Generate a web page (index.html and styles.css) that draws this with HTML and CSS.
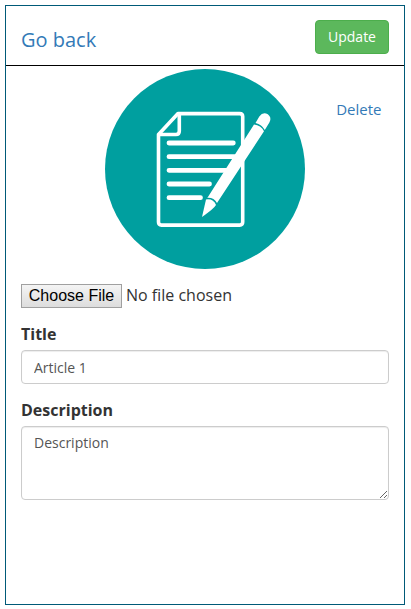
FILE: index.html
```html
<!DOCTYPE html>
<html lang="en">
<head>
<meta charset="utf-8">
<title>Edit article</title>
<link rel="stylesheet" href="styles.css">
</head>
<body>
<main class="panel">
  <header class="header">
    <a class="back">Go back</a>
    <button class="update" type="button">Update</button>
  </header>
  <section class="media">
    <svg class="picture" viewBox="0 0 200 200" width="200" height="200">
      <circle cx="100" cy="100" r="100" fill="#009f9f"/>
      <g fill="none" stroke="#fff" stroke-width="3.6" stroke-linejoin="round" stroke-linecap="round">
        <path d="M73 44.600H134.700Q137.700 44.600 137.700 47.600V153.100Q137.700 156.100 134.700 156.100H56.500Q53.500 156.100 53.500 153.100V65.500Z"/>
        <path d="M74.300 45.500V62Q74.300 65.500 71 65.500H54.500"/>
        <path stroke-width="4.800" d="M64 74H128.300M64 87.700H131M64 101.300H122M64 115H104.500M64 128.700H95.500"/>
      </g>
      <g fill="#fff">
        <path d="M150.500 54L154.300 47.500Q158 42.300 162.800 45.300Q167 48.500 164.500 53.300L159.800 61Q156.800 55.400 150.500 54Z"/>
        <path d="M149 55.500Q156 56.300 159 62.200L112 134Q109 128.500 102.300 128.900Z"/>
        <path d="M101 130.500Q108.500 129.500 111 136Q109 139.500 97 148Z"/>
      </g>
    </svg>
    <a class="delete">Delete</a>
  </section>
  <form class="form">
    <div class="file"><button class="choose" type="button">Choose File</button><span>No file chosen</span></div>
    <label class="label" for="title">Title</label>
    <input class="control" id="title" type="text" value="Article 1">
    <label class="label" for="description">Description</label>
    <textarea class="control area" id="description">Description</textarea>
  </form>
</main>
</body>
</html>
```
FILE: styles.css
```css
* { box-sizing: border-box; }
body {
  margin: 0;
  padding: 5px;
  background: #fff;
  color: #333;
  font: 16px/23px "Open Sans", sans-serif;
}
.panel { width: 400px; height: 600px; border: 1px solid #005a78; }
.header {
  display: flex;
  justify-content: space-between;
  align-items: flex-start;
  height: 60px;
  padding: 14px 15px 0;
  border-bottom: 1px solid #000;
}
a { color: #337ab7; text-decoration: none; }
.back { font-size: 20px; line-height: 28px; padding-top: 6px; }
.update {
  width: 74px;
  height: 34px;
  padding: 0;
  border: 1px solid #4cae4c;
  border-radius: 4px;
  background: #5cb85c;
  color: #fff;
  font: 14px/20px "Open Sans", sans-serif;
}
.media {
  display: grid;
  grid-template-columns: 200px 1fr;
  padding: 3px 22.5px 0 99px;
}
.picture { display: block; }
.delete { justify-self: end; padding-top: 30px; font-size: 15px; line-height: 21px; }
.form { display: flex; flex-direction: column; padding: 15px 15px 0; }
.file { display: flex; height: 24px; gap: 4px; }
.choose {
  width: 101px;
  height: 24px;
  padding: 0;
  border: 1px solid #a0a0a0;
  border-radius: 0;
  background: linear-gradient(#f4f4f4, #ddd);
  color: #000;
  font: 16px/20px "Liberation Sans", sans-serif;
}
.label { margin: 15px 0 4px; font-weight: 700; line-height: 23px; }
.control {
  width: 100%;
  height: 34px;
  margin: 0;
  padding: 6px 12px;
  border: 1px solid #ccc;
  border-radius: 4px;
  background: #fff;
  box-shadow: inset 0 1px 1px rgba(0, 0, 0, .075);
  color: #555;
  font: 14px/20px "Open Sans", sans-serif;
}
.area { height: 74px; resize: vertical; }
```
